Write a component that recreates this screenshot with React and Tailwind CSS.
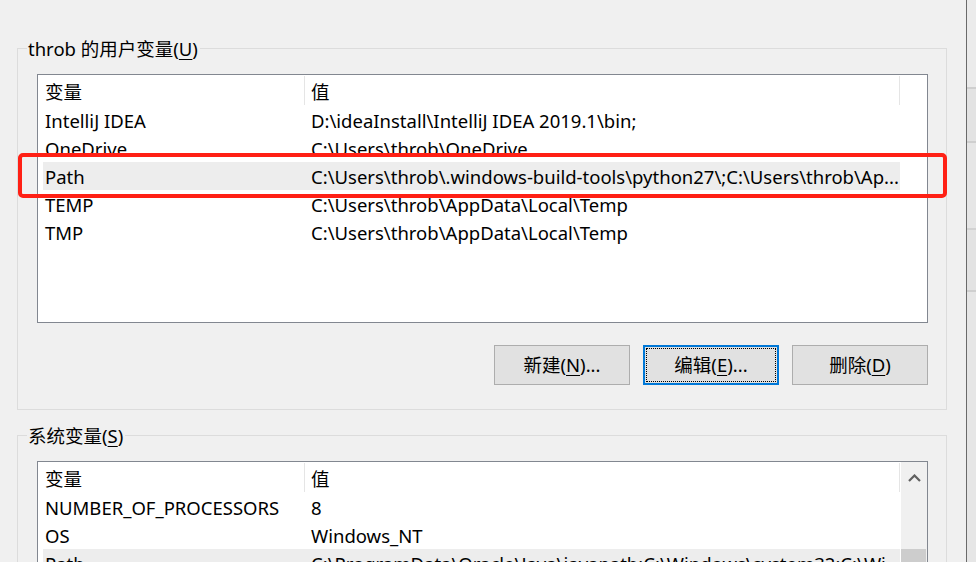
import React from "react";

const FONT = "font-[family-name:'Noto_Sans','Noto_Sans_CJK_SC',sans-serif]";

const userRows = [
  ["IntelliJ IDEA", String.raw`D:\ideaInstall\IntelliJ IDEA 2019.1\bin;`],
  ["OneDrive", String.raw`C:\Users\throb\OneDrive`],
  ["Path", String.raw`C:\Users\throb\.windows-build-tools\python27\;C:\Users\throb\Ap...`, true],
  ["TEMP", String.raw`C:\Users\throb\AppData\Local\Temp`],
  ["TMP", String.raw`C:\Users\throb\AppData\Local\Temp`],
];

const sysRows = [
  ["NUMBER_OF_PROCESSORS", "8"],
  ["OS", "Windows_NT"],
  ["Path", String.raw`C:\ProgramData\Oracle\Java\javapath;C:\Windows\system32;C:\Wi...`, true],
];

function Row({ name, value, selected }) {
  return (
    <div
      className={`flex h-[28px] w-[857px] shrink-0 items-center ml-[5px] whitespace-nowrap overflow-hidden pt-[2px] ${
        selected ? "bg-[#ededed]" : ""
      }`}
    >
      <div className="w-[261px] shrink-0 pl-[2px]">{name}</div>
      <div className="flex-1 pl-[7px] overflow-hidden">{value}</div>
    </div>
  );
}

function Header() {
  return (
    <div className="flex h-[31px] w-[862px] shrink-0 items-center">
      <div className="w-[266px] shrink-0 pl-[7px] pt-[2px]">变量</div>
      <div className="h-[29px] w-px bg-[#e5e5e5]" />
      <div className="flex-1 pl-[6px] pt-[2px]">值</div>
      <div className="h-[29px] w-px bg-[#e5e5e5]" />
    </div>
  );
}

function Mn({ children }) {
  return <span className="underline underline-offset-[3px] decoration-1">{children}</span>;
}

function Btn({ children, focused }) {
  return (
    <div
      className={`flex h-[40px] w-[136px] items-center justify-center ${
        focused ? "border-2 border-[#0078d7] bg-[#e1e1e1] p-px" : "border border-[#adadad] bg-[#e1e1e1]"
      }`}
    >
      {focused ? (
        <div className="flex h-full w-full items-center justify-center border border-dotted border-black">
          {children}
        </div>
      ) : (
        children
      )}
    </div>
  );
}

export default function App() {
  return (
    <div
      className={`${FONT} relative flex h-[562px] w-[976px] overflow-hidden bg-[#f0f0f0] text-[18.5px] leading-[24px] text-black`}
    >
      <div className="flex w-[966px] shrink-0 flex-col pl-[17px] pt-[48px]">
        {/* user variables group */}
        <div className="flex h-[362px] w-[930px] shrink-0 flex-col border border-[#dcdcdc] pl-[19px]">
          <div className="-mt-[12px] ml-[-10px] h-[24px] w-fit bg-[#f0f0f0] pl-px pr-[2px]">
            throb 的用户变量(<Mn>U</Mn>)
          </div>
          <div className="mt-[13px] flex h-[249px] w-[891px] shrink-0 flex-col border border-[#828790] bg-white">
            <Header />
            {userRows.map(([n, v, s]) => (
              <Row key={n} name={n} value={v} selected={s} />
            ))}
          </div>
          <div className="mt-[22px] flex w-[891px] justify-end gap-[13px]">
            <Btn>
              新建(<Mn>N</Mn>)...
            </Btn>
            <Btn focused>
              编辑(<Mn>E</Mn>)...
            </Btn>
            <Btn>
              删除(<Mn>D</Mn>)
            </Btn>
          </div>
        </div>

        {/* system variables group */}
        <div className="mt-[25px] flex h-[200px] w-[930px] shrink-0 flex-col border border-[#dcdcdc] pl-[19px]">
          <div className="-mt-[12px] ml-[-10px] h-[24px] w-fit bg-[#f0f0f0] pl-px pr-[2px]">
            系统变量(<Mn>S</Mn>)
          </div>
          <div className="mt-[13px] flex h-[200px] w-[891px] shrink-0 border border-[#828790] bg-white">
            <div className="flex w-[863px] shrink-0 flex-col">
              <Header />
              {sysRows.map(([n, v, s]) => (
                <Row key={n} name={n} value={v} selected={s} />
              ))}
            </div>
            <div className="flex w-[26px] shrink-0 flex-col bg-[#f0f0f0]">
              <div className="flex h-[32px] items-center justify-center">
                <svg width="13" height="8" viewBox="0 0 13 8">
                  <path d="M1 7 L6.5 1.5 L12 7" fill="none" stroke="#606060" strokeWidth="2.2" />
                </svg>
              </div>
              <div className="h-[55px]" />
              <div className="mr-px h-[60px] bg-[#cdcdcd]" />
            </div>
          </div>
        </div>
      </div>

      {/* window edge on the right */}
      <div className="w-px shrink-0 bg-[#6a6a6a]" />
      <div className="flex flex-1 flex-col bg-[#e8e8e8]">
        <div className="h-[87px] bg-[#ebebeb]" />
        <div className="h-[2px] bg-[#cfcfcf]" />
        <div className="h-[52px] bg-[#e3e3e3]" />
        <div className="h-[2px] bg-[#cfcfcf]" />
        <div className="h-[85px] bg-[#e6e6e6]" />
        <div className="h-[2px] bg-[#d2d2d2]" />
        <div className="h-[60px] bg-[#e3e3e3]" />
        <div className="h-[2px] bg-[#cfcfcf]" />
        <div className="flex-1 bg-[#e6e6e6]" />
      </div>

      {/* red annotation box */}
      <div className="pointer-events-none absolute left-[18px] top-[153px] h-[45px] w-[929px] rounded-[5px] border-[4px] border-[#ff2015]" />
    </div>
  );
}
